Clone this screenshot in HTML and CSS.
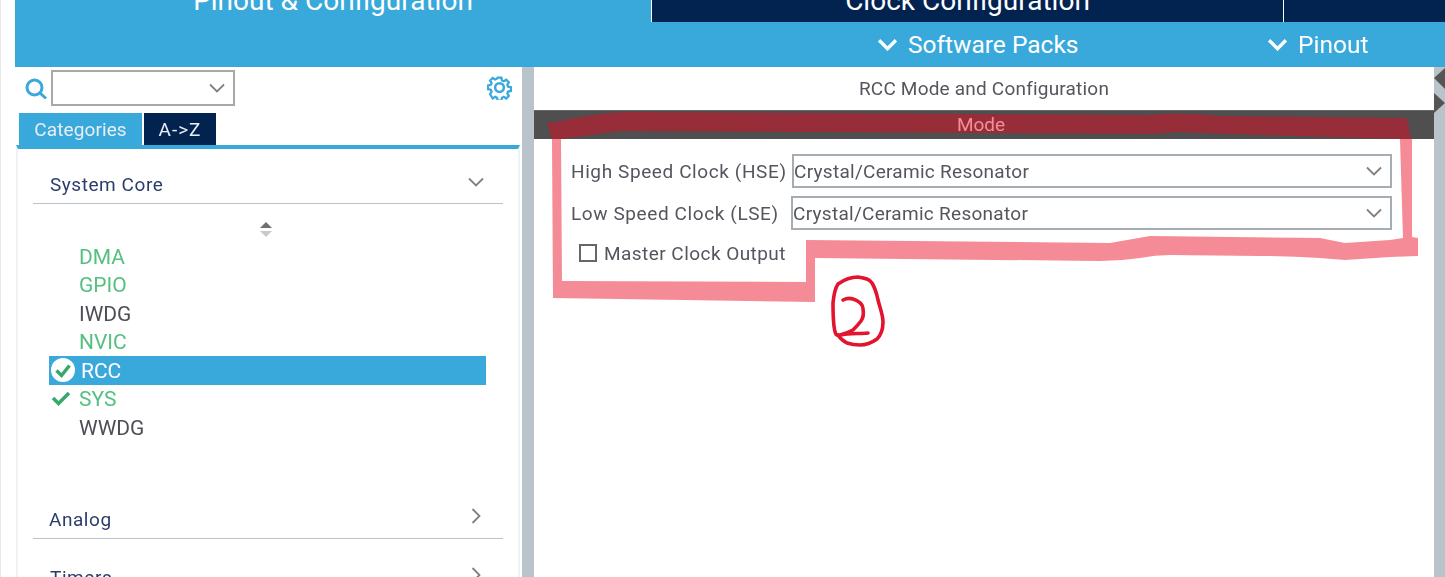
FILE: index.html
```html
<!DOCTYPE html>
<html lang="en">
<head>
<meta charset="utf-8">
<title>RCC Mode and Configuration</title>
<link rel="stylesheet" href="styles.css">
</head>
<body>
<div class="app">
  <nav class="tabs">
    <div class="tab tab-active"><span>Pinout &amp; Configuration</span></div>
    <div class="tab tab-clock"><span>Clock Configuration</span></div>
    <div class="tab tab-rest"></div>
  </nav>
  <div class="menu">
    <div class="menu-item menu-packs">
      <svg class="menu-chev" viewBox="0 0 20 12"><path d="M2 2l8 8 8-8"/></svg>
      <span>Software Packs</span>
    </div>
    <div class="menu-item">
      <svg class="menu-chev" viewBox="0 0 20 12"><path d="M2 2l8 8 8-8"/></svg>
      <span>Pinout</span>
    </div>
  </div>
  <main class="main">
    <aside class="left">
      <div class="search">
        <svg class="search-icon" viewBox="0 0 22 22"><circle cx="9.5" cy="9.5" r="7.5"/><path d="M15 15l6 5.5"/></svg>
        <div class="combo">
          <svg class="chev" viewBox="0 0 16 10"><path d="M1 1.500l7 7 7-7"/></svg>
        </div>
        <svg class="gear" viewBox="0 0 24 24"><path d="M10 1.5h4l.6 3 2 .9 2.6-1.7 2.8 2.8-1.7 2.6.9 2 3 .6v4l-3 .6-.9 2 1.7 2.6-2.8 2.8-2.6-1.7-2 .9-.6 3h-4l-.6-3-2-.9-2.6 1.700L1.900 19l1.700-2.600-.9-2-3-.6v-4l3-.6.9-2L1.900 4.600l2.800-2.800 2.600 1.700 2-.9z" transform="translate(1.2 1.200) scale(.9)"/><circle cx="12" cy="12" r="4.200"/></svg>
      </div>
      <div class="view-tabs">
        <div class="view-tab view-tab-on">Categories</div>
        <div class="view-tab view-tab-off">A-&gt;Z</div>
      </div>
      <div class="tree">
        <div class="group group-first">
          <span>System Core</span>
          <svg class="chev" viewBox="0 0 16 10"><path d="M1 1.500l7 7 7-7"/></svg>
        </div>
        <div class="sort">
          <svg viewBox="0 0 14 16"><path class="sort-up" d="M7 0l6 6H1z"/><path class="sort-down" d="M1 9h12l-6 6z"/></svg>
        </div>
        <ul class="items">
          <li class="item ok">DMA</li>
          <li class="item ok">GPIO</li>
          <li class="item">IWDG</li>
          <li class="item ok">NVIC</li>
          <li class="item selected">
            <svg class="check-round" viewBox="0 0 26 26"><circle cx="13" cy="13" r="12"/><path d="M6.500 13.500l5 5 8-10"/></svg>
            RCC
          </li>
          <li class="item ok">
            <svg class="check" viewBox="0 0 20 16"><path d="M2 8l5.500 5.500L18 3"/></svg>
            SYS
          </li>
          <li class="item">WWDG</li>
        </ul>
        <div class="group group-analog">
          <span>Analog</span>
          <svg class="chev-r" viewBox="0 0 10 16"><path d="M1.500 1l7 7-7 7"/></svg>
        </div>
        <div class="group group-timers">
          <span>Timers</span>
          <svg class="chev-r" viewBox="0 0 10 16"><path d="M1.500 1l7 7-7 7"/></svg>
        </div>
      </div>
    </aside>
    <div class="splitter"></div>
    <section class="right">
      <h1 class="title">RCC Mode and Configuration</h1>
      <div class="band">Mode</div>
      <div class="form">
        <div class="row">
          <label class="row-label">High Speed Clock (HSE)</label>
          <div class="select">Crystal/Ceramic Resonator
            <svg class="chev" viewBox="0 0 16 10"><path d="M1 1.500l7 7 7-7"/></svg>
          </div>
        </div>
        <div class="row row-lse">
          <label class="row-label">Low Speed Clock (LSE)</label>
          <div class="select">Crystal/Ceramic Resonator
            <svg class="chev" viewBox="0 0 16 10"><path d="M1 1.500l7 7 7-7"/></svg>
          </div>
        </div>
        <div class="check-row">
          <span class="box"></span>
          <span>Master Clock Output</span>
        </div>
      </div>
    </section>
    <div class="side">
      <svg viewBox="0 0 11 46"><path d="M11 1v21L0 11z"/><path d="M0 26l11 10-11 10z"/></svg>
    </div>
  </main>
</div>
<svg class="annotation" viewBox="0 0 1445 577">
  <path class="marker" fill-rule="evenodd" d="M547 123C570 120 590 113 630 112L1150 115Q1180 112 1220 116L1405 118Q1409 120 1409 130L1412 140L1412 237L1418 238L1418 256L1390 257L1345 260L1320 258Q1290 256 1260 256L1170 255Q1155 255 1140 258Q1120 261 1100 261L815 258L815 302L553 298L552 140ZM561 139Q590 135 620 131L1150 134L1180 132L1230 134L1400 139L1403 238L1390 240L1345 243L1320 238L1150 236L1110 243L806 240L806 282L562 281Z"/>
  <path class="pen" d="M838 335C834 337 833 320 833 303C834 292 836 287 838 284C845 279 852 277 858 277C865 278 870 279 872 283C875 288 877 295 878 300C880 308 883 315 883 322C883 330 881 335 877 339C870 344 865 345 860 345C855 345 850 344 847 343C843 341 840 338 838 335"/>
  <path class="pen" d="M843 300C847 298 850 298 853 299C859 301 863 304 863 309C864 314 863 318 861 321C858 325 855 328 853 330C849 332 844 334 840 335C850 333 860 334 868 333"/>
</svg>
</body>
</html>
```
FILE: styles.css
```css
* { box-sizing: border-box; }
html, body { margin: 0; height: 100%; }
body {
  background: #fff;
  font-family: Roboto, "Liberation Sans", sans-serif;
  overflow: hidden;
  position: relative;
  box-shadow: inset 1px 0 #e8e8e8;
}
.app {
  height: 577px;
  margin-left: 15px;
  display: flex;
  flex-direction: column;
  filter: blur(.35px);
}
.tabs {
  height: 22px;
  display: flex;
  gap: 1px;
  overflow: hidden;
  background: #fff;
  flex: none;
}
.tab {
  display: flex;
  align-items: flex-end;
  justify-content: center;
  color: #fff;
  font-size: 28px;
  line-height: 32px;
  padding-bottom: 5px;
  background: #022350;
}
.tab span { flex: none; }
.tab-active { width: 636px; background: #39a9dc; }
.tab-clock { width: 631px; }
.tab-rest { flex: 1; }
.menu {
  height: 45px;
  flex: none;
  background: #39a9dc;
  display: flex;
  align-items: center;
  padding: 0 0 0 862px;
  color: #fff;
  font-size: 24.500px;
}
.menu-item { display: flex; align-items: center; gap: 10px; }
.menu-packs { width: 390px; }
.menu-chev { width: 21px; height: 13px; fill: none; stroke: #fff; stroke-width: 3.200; }
.main { flex: 1; display: flex; min-height: 0; }
.left {
  width: 507px;
  flex: none;
  display: flex;
  flex-direction: column;
  overflow: hidden;
}
.search {
  height: 46px;
  flex: none;
  display: flex;
  align-items: flex-start;
  padding: 3px 10px 0 10px;
}
.search-icon {
  width: 22px;
  height: 22px;
  margin: 8px 4px 0 0;
  fill: none;
  stroke: #39a9dc;
  stroke-width: 3;
}
.combo {
  width: 184px;
  height: 36px;
  border: 2px solid #a8a8a8;
  display: flex;
  align-items: center;
  justify-content: flex-end;
  padding-right: 8px;
}
.gear {
  width: 25px;
  height: 25px;
  margin: 5px 0 0 auto;
  fill: none;
  stroke: #39a9dc;
  stroke-width: 2.400;
}
.chev {
  width: 16px;
  height: 10px;
  fill: none;
  stroke: #808080;
  stroke-width: 1.800;
}
.chev-r {
  width: 10px;
  height: 16px;
  fill: none;
  stroke: #808080;
  stroke-width: 1.800;
}
.view-tabs {
  display: flex;
  gap: 2px;
  height: 32px;
  flex: none;
  padding-left: 4px;
}
.view-tab {
  display: flex;
  align-items: center;
  justify-content: center;
  color: #e9eef2;
  font-size: 19px;
}
.view-tab-on { width: 123px; background: #39a9dc; letter-spacing: .1px; }
.view-tab-off { width: 72px; background: #022350; letter-spacing: 1px; }
.tree {
  flex: 1;
  margin: 0 2px 0 1px;
  border-top: 4px solid #39a9dc;
  border-left: 2px solid #eff2f4;
  border-right: 2px solid #eff2f4;
  padding: 0 15px;
  overflow: hidden;
}
.group {
  display: flex;
  align-items: center;
  justify-content: space-between;
  border-bottom: 1px solid #b9c4ca;
  color: #2d3d6b;
  font-size: 19px;
  letter-spacing: .55px;
  padding: 0 19px 0 17px;
}
.group-first { height: 55px; padding-top: 17px; }
.group-first .chev { margin-top: -5px; }
.group-analog { height: 39px; margin-top: 58px; padding: 0 22px 0 16px; }
.group-analog span { margin-top: 2px; }
.group-analog .chev-r { margin-top: -6px; }
.group-timers { height: 39px; margin-top: 3px; padding: 32px 22px 0 17px; border: 0; }
.group-timers .chev-r { margin-top: -4px; }
.sort { height: 37px; display: flex; justify-content: center; align-items: flex-end; padding-right: 4px; }
.sort svg { width: 14px; height: 16px; margin-bottom: 3px; }
.sort-up { fill: #707070; }
.sort-down { fill: #c9c9c9; }
.items { list-style: none; margin: 1px 0 0; padding: 0 17px 0 16px; }
.item {
  height: 28.500px;
  display: flex;
  align-items: center;
  padding: 1px 0 0 30px;
  position: relative;
  font-size: 21px;
  color: #4e4e58;
}
.ok { color: #55c07f; }
.selected { background: #39a9dc; color: #fff; padding-left: 32px; }
.check-round {
  position: absolute;
  left: 1px;
  top: 1px;
  width: 26px;
  height: 26px;
}
.check-round circle { fill: #fff; }
.check-round path { fill: none; stroke: #3aa76a; stroke-width: 3.500; }
.check {
  position: absolute;
  left: 2px;
  top: 5px;
  width: 20px;
  height: 16px;
  fill: none;
  stroke: #3aa76a;
  stroke-width: 3.500;
}
.splitter { width: 12px; flex: none; background: #b9c4ca; }
.right { flex: 1; min-width: 0; display: flex; flex-direction: column; }
.title {
  margin: 0;
  height: 43px;
  flex: none;
  display: flex;
  align-items: center;
  justify-content: center;
  font-size: 19px;
  font-weight: 400;
  letter-spacing: .2px;
  color: #55555f;
}
.band {
  height: 29px;
  flex: none;
  background: #4f4f4f;
  border-top: 1px solid #666;
  display: flex;
  align-items: center;
  justify-content: center;
  color: #fff;
  font-size: 19px;
  padding: 0 6px 2px 0;
}
.form { padding: 15px 42px 0 37px; }
.row { display: flex; align-items: center; height: 34px; color: #55555f; font-size: 19px; }
.row-lse { margin-top: 8px; }
.row-label { width: 221px; flex: none; letter-spacing: .6px; }
.row-lse .row-label { width: 220px; }
.select {
  flex: 1;
  height: 34px;
  border: 2px solid #a5adb3;
  display: flex;
  align-items: center;
  justify-content: space-between;
  letter-spacing: .28px;
  padding: 0 8px 0 0;
}
.check-row {
  display: flex;
  align-items: center;
  gap: 7px;
  margin: 6px 0 0 8px;
  height: 34px;
  color: #55555f;
  font-size: 19px;
  letter-spacing: .45px;
}
.box { width: 18px; height: 18px; border: 2px solid #666; flex: none; }
.side { width: 11px; flex: none; background: #b9c4ca; }
.side svg { display: block; width: 11px; height: 46px; fill: #555; }
.annotation {
  position: absolute;
  left: 0;
  top: 0;
  width: 1445px;
  height: 577px;
  pointer-events: none;
}
.marker { fill: rgba(232, 6, 30, .466); }
.pen { fill: none; stroke: #e3152e; stroke-width: 3.600; stroke-linecap: round; stroke-linejoin: round; }
```
